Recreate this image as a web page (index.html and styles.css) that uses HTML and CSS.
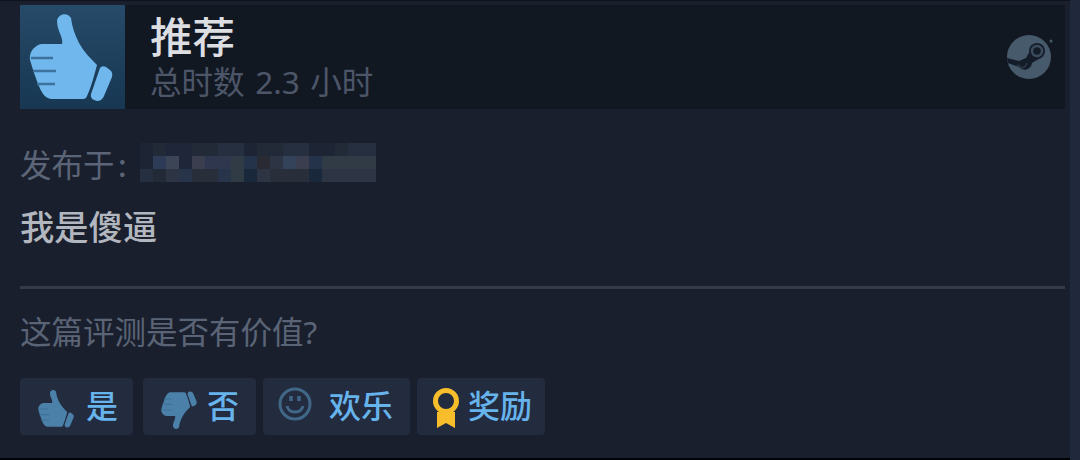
FILE: index.html
```
<!DOCTYPE html>
<html lang="zh-CN">
<head>
  <meta charset="UTF-8" />
  <title>评测</title>
  <meta name="viewport" content="width=device-width, initial-scale=1.0">
  <link rel="stylesheet" href="styles.css">
</head>
<body>
  <svg width="0" height="0" class="defs">
    <symbol id="thumb" viewBox="0 0 84 88">
      <path d="M28 7C29-1 39-2 42 4C43 13 46 21 50 29C55 38 62 45 68 51C65 62 62 74 58 82Q57 85 54 85H22C15 84 12 77 9 70C6 62 3 53 1 46C0 38 5 32 12 30H33C34 26 32 22 30 17Q28 12 28 7Z"/>
      <path d="M71 54Q73 51 77 53L81 56Q84 58 83 63L75 82Q73 87 68 87L65 86Q61 84 62 80Z"/>
      <path class="fingers" d="M2 44H24M4 57H27M8 70H26"/>
    </symbol>
  </svg>

  <div class="review">
    <div class="header">
      <div class="thumb-box"><svg class="thumb" viewBox="0 0 84 88"><use href="#thumb"/></svg></div>
      <div class="summary">
        <div class="title">推荐</div>
        <div class="hours">总时数 2.3 小时</div>
      </div>
      <svg class="steam" viewBox="0 0 46 46">
        <circle class="disc" cx="22" cy="23" r="22"/>
        <path class="arm" d="M0 24L12 27L19 24L24 15L35 23L25 29C24 36 16 38 12 33L1 29Z"/>
        <circle class="arm" cx="30" cy="17" r="8"/>
        <circle class="ring" cx="30" cy="17" r="5"/>
        <path class="joint" d="M10 31L15 34Q19 33 20 29"/>
        <circle class="disc" cx="44" cy="7" r="1.5"/>
      </svg>
    </div>

    <div class="posted">
      <span class="label">发布于</span>
      <span class="colon">:</span>
      <svg class="mosaic" viewBox="0 0 236 39" shape-rendering="crispEdges">
        <rect width="236" height="39" fill="#222a38"/>
        <path fill="#20263a" d="M26 0h26v13H26zM39 13h13v13H39z"/>
        <path fill="#262f40" d="M78 0h26v13H78zM143 0h26v13h-26zM208 0h28v13h-28zM0 26h13v13H0z"/>
        <path fill="#1d2433" d="M0 0h13v26H0zM104 0h13v13h-13zM169 0h26v13h-26z"/>
        <path fill="#2e3b57" d="M13 13h13v13H13z"/>
        <path fill="#3b4555" d="M26 13h13v13H26z"/>
        <path fill="#3a3e4f" d="M52 13h13v13H52zM156 13h13v13h-13z"/>
        <path fill="#2e374e" d="M65 13h26v13H65z"/>
        <path fill="#313b46" d="M91 13h13v26H91zM182 13h54v13h-54z"/>
        <path fill="#24334a" d="M104 13h13v13h-13zM169 13h13v13h-13z"/>
        <path fill="#292a34" d="M117 13h13v13h-13z"/>
        <path fill="#2d3544" d="M130 13h13v13h-13zM26 26h13v13H26zM117 26h13v13h-13zM182 26h54v13h-54z"/>
        <path fill="#35435a" d="M143 13h13v13h-13z"/>
        <path fill="#28344a" d="M39 26h13v13H39zM78 26h13v13H78z"/>
        <path fill="#292e3b" d="M52 26h26v13H52zM130 26h39v13h-39z"/>
        <path fill="#1a283b" d="M104 26h13v13h-13zM169 26h13v13h-13z"/>
      </svg>
    </div>
    <div class="content">我是傻逼</div>
    <div class="divider"></div>
    <div class="question">这篇评测是否有价值?</div>

    <div class="buttons">
      <a class="btn yes"><svg class="vote" viewBox="0 0 84 88"><use href="#thumb"/></svg><span>是</span></a>
      <a class="btn no"><svg class="vote down" viewBox="0 0 84 88"><use href="#thumb"/></svg><span>否</span></a>
      <a class="btn funny">
        <svg class="smile" viewBox="0 0 34 34">
          <circle cx="17" cy="17" r="15"/>
          <path d="M9 19C11 27 23 27 25 19"/>
          <path class="eyes" d="M13 9v5M21 9v5"/>
        </svg>
        <span>欢乐</span>
      </a>
      <a class="btn award">
        <svg class="medal" viewBox="0 0 28 42">
          <path d="M5 25H23V41L14 36L5 41Z"/>
          <circle cx="14" cy="14" r="10.5"/>
        </svg>
        <span>奖励</span>
      </a>
    </div>
  </div>
</body>
</html>
```

FILE: styles.css
```
* {
  box-sizing: border-box;
}
body {
  margin: 0;
  height: 460px;
  overflow: hidden;
  background: #1f293b;
  font-family: "Noto Sans", "Noto Sans CJK SC", sans-serif;
}
.defs {
  display: block;
}
.review {
  width: 1070px;
  height: 460px;
  padding: 3px 5px 0 20px;
  background: #191f2d;
  border-top: 1px solid #10131e;
  border-bottom: 2px solid #020306;
}
.header {
  display: flex;
  height: 104px;
  margin-top: 1px;
  background: #121822;
}
.thumb-box {
  width: 105px;
  height: 104px;
  padding: 9px 0 0 9px;
  background: linear-gradient(#264a69, #173752);
}
.thumb {
  display: block;
  width: 84px;
  height: 88px;
  fill: #6fb7ed;
}
.fingers {
  fill: none;
  stroke: #3c729c;
  stroke-width: 2.5;
}
.summary {
  flex: 1;
  padding-left: 25px;
  white-space: nowrap;
}
.title {
  height: 58px;
  line-height: 64px;
  font-size: 42.5px;
  font-weight: 500;
  color: #dcdee2;
}
.hours {
  height: 38px;
  line-height: 38px;
  font-size: 31.5px;
  word-spacing: 2.5px;
  color: #4d5669;
}
.steam {
  width: 46px;
  height: 46px;
  margin: 29px 12px 0 0;
}
.disc {
  fill: #475a6c;
}
.arm {
  fill: #141c29;
}
.ring {
  fill: none;
  stroke: #3c4c5d;
  stroke-width: 2.5;
}
.joint {
  fill: none;
  stroke: #2a3746;
  stroke-width: 1.5;
}
.posted {
  display: flex;
  height: 39px;
  margin-top: 34px;
  line-height: 43px;
  font-size: 31.5px;
  color: #5b6577;
}
.label {
  width: 98px;
}
.colon {
  width: 22px;
  font-weight: 500;
}
.mosaic {
  width: 236px;
  height: 39px;
}
.content {
  height: 50px;
  margin-top: 20px;
  line-height: 50px;
  font-size: 34.3px;
  font-weight: 500;
  color: #b2b6be;
}
.divider {
  height: 3px;
  margin-top: 34px;
  background: #343a49;
}
.question {
  height: 44px;
  margin-top: 22px;
  line-height: 42px;
  font-size: 31.5px;
  color: #5a6476;
}
.buttons {
  display: flex;
  margin-top: 23px;
}
.btn {
  display: flex;
  height: 57px;
  border-radius: 4px;
  background: #232b3f;
  line-height: 56px;
  font-size: 32px;
  font-weight: 500;
  color: #67b3ec;
}
.yes {
  width: 113px;
  margin-right: 10px;
  padding-left: 17px;
}
.no {
  width: 113px;
  margin-right: 7px;
  padding-left: 17px;
}
.vote {
  width: 38px;
  height: 38px;
  margin: 12px 11px 0 0;
  fill: #4b80a9;
}
.vote .fingers {
  stroke: #3c688c;
}
.down {
  margin: 13px 9px 0 0;
  transform: scaleY(-1);
}
.funny {
  width: 147px;
  margin-right: 7px;
  padding-left: 15px;
}
.smile {
  width: 34px;
  height: 34px;
  margin: 9px 17px 0 0;
  fill: none;
  stroke: #416788;
  stroke-width: 3;
}
.eyes {
  stroke-width: 3.5;
}
.award {
  width: 128px;
  padding-left: 15px;
}
.medal {
  width: 28px;
  height: 42px;
  margin: 9px 8px 0 0;
  fill: #f7bd2b;
}
.medal circle {
  fill: #232b3f;
  stroke: #f7bd2b;
  stroke-width: 5;
}
```
